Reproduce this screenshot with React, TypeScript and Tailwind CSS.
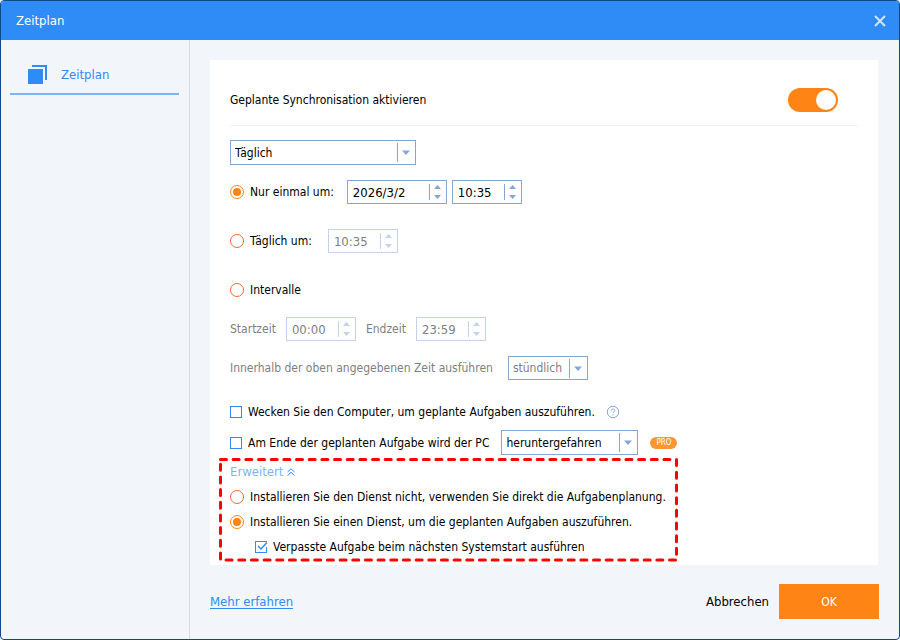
import { useState } from 'react';
import type { ReactNode } from 'react';
import clsx from 'clsx';

function RadioOption({ name, label, checked, onSelect }: {
  name: string;
  label: string;
  checked: boolean;
  onSelect: () => void;
}) {
  return (
    <label className="flex items-center gap-1.5">
      <input
        type="radio"
        name={name}
        checked={checked}
        onChange={onSelect}
        className="w-3.5 h-3.5 shrink-0 appearance-none rounded-full border border-[#ee6a35] bg-white bg-clip-content p-0.5 checked:border-[#ff8416] checked:bg-[#ff8416]"
      />
      {label}
    </label>
  );
}

function CheckOption({ label, checked, onToggle }: {
  label: string;
  checked: boolean;
  onToggle: () => void;
}) {
  return (
    <label className="flex items-center gap-1.5">
      <span className="grid">
        <input
          type="checkbox"
          checked={checked}
          onChange={onToggle}
          className="col-start-1 row-start-1 w-3 h-3 appearance-none border border-[#2f8bf6] bg-white"
        />
        {checked && (
          <svg viewBox="0 0 12 12" className="pointer-events-none col-start-1 row-start-1 w-3 h-3 overflow-visible" fill="none">
            <path d="M11.5 1v5" stroke="#fff" strokeWidth="2" />
            <path d="M3 5l3 3L12 1.5" stroke="#2f8bf6" strokeWidth="1.5" />
          </svg>
        )}
      </span>
      {label}
    </label>
  );
}

function SelectBox({ id, label, options, className }: {
  id: string;
  label: string;
  options: string[];
  className: string;
}) {
  return (
    <span className={clsx('flex items-center border border-[#86a5d6] bg-white', className)}>
      <select id={id} aria-label={label} className="h-full min-w-0 flex-1 appearance-none pl-1 outline-none">
        {options.map((option) => (
          <option key={option}>{option}</option>
        ))}
      </select>
      <svg viewBox="0 0 18 19" className="pointer-events-none w-[18px] h-[19px] shrink-0">
        <path d="M0 0h1v19H0z M5 7.5h8l-4 4.500z" fill="#86a5d6" />
      </svg>
    </span>
  );
}

function SpinBox({ label, value, disabled, className }: {
  label: string;
  value: string;
  disabled?: boolean;
  className: string;
}) {
  return (
    <span
      className={clsx(
        'flex h-6 items-center border bg-white text-[13px]',
        disabled ? 'border-[#c3d2ea] text-[#808080]' : 'border-[#86a5d6]',
        className
      )}
    >
      <input
        type="text"
        aria-label={label}
        defaultValue={value}
        disabled={disabled}
        className="h-full min-w-0 flex-1 pl-[5px] outline-none"
      />
      <svg viewBox="0 0 17 16" className="w-[17px] h-4 shrink-0" fill={disabled ? '#c3d2ea' : '#86a5d6'}>
        <path d="M0 0h1v16H0z M5 5h7L8.500 1z M5 11h7l-3.500 4z" />
      </svg>
    </span>
  );
}

function Row({ children, className = 'h-6' }: { children: ReactNode; className?: string }) {
  return <div className={clsx('flex items-center', className)}>{children}</div>;
}

export default function App() {
  const [enabled, setEnabled] = useState(true);
  const [mode, setMode] = useState('once');
  const [service, setService] = useState('install');
  const [wake, setWake] = useState(false);
  const [shutdown, setShutdown] = useState(false);
  const [missed, setMissed] = useState(true);

  return (
    <div className="flex min-h-screen flex-col overflow-hidden rounded-[4px] border border-[#0d4a8c] bg-[#f2f5fa] font-['DejaVu_Sans_Condensed','DejaVu_Sans',sans-serif] text-[12px] leading-4 text-black">
      {/* Title bar */}
      <header className="flex h-[39px] items-center justify-between bg-[#2f8bf6] pl-[15px] pr-[11px] text-white">
        <h1 className="text-[13px]">Zeitplan</h1>
        <button type="button" aria-label="Schließen" className="p-0.5">
          <svg viewBox="0 0 12 12" className="w-3 h-3" stroke="#d5e8fd" strokeWidth="1.8">
            <path d="M1 1l10 10M11 1L1 11" />
          </svg>
        </button>
      </header>

      <div className="flex flex-1">
        {/* Sidebar */}
        <nav className="w-[189px] shrink-0 border-r border-[#d5dbe1] pl-[9px] pr-2.5 pt-4">
          <a href="#zeitplan" className="flex h-[39px] items-center gap-[14px] border-b-2 border-[#7fb3f8] pl-[18px] text-[#2f8bf6]">
            <svg viewBox="0 0 19 19" className="w-[19px] h-[19px]" fill="#2f8bf6">
              <rect y="4" width="15" height="15" rx="0.5" />
              <path d="M4 0h15v15h-2V2H4z" />
            </svg>
            <span className="text-[13px]">Zeitplan</span>
          </a>
        </nav>

        <main className="flex min-w-0 flex-1 flex-col px-5 pt-5">
          <section className="mr-px bg-white px-5 pt-7 pb-1.5">
            <div className="flex items-center justify-between border-b border-[#f2f2f2] pb-[13px]">
              <label htmlFor="enable">Geplante Synchronisation aktivieren</label>
              <span className="grid items-center pr-5">
                <input
                  id="enable"
                  type="checkbox"
                  role="switch"
                  checked={enabled}
                  onChange={() => setEnabled(!enabled)}
                  className="peer col-start-1 row-start-1 h-6 w-[50px] appearance-none rounded-full bg-[#c8ced6] checked:bg-[#ff8416]"
                />
                <span className="pointer-events-none col-start-1 row-start-1 ml-0.5 h-5 w-5 rounded-full bg-white peer-checked:ml-7" />
              </span>
            </div>

            <SelectBox
              id="frequency"
              label="Häufigkeit"
              options={['Täglich', 'Wöchentlich', 'Monatlich']}
              className="mt-3.5 h-[25px] w-[186px]"
            />

            {/* Daily options */}
            <Row className="mt-[15px] h-6">
              <RadioOption name="mode" label="Nur einmal um:" checked={mode === 'once'} onSelect={() => setMode('once')} />
              <SpinBox label="Datum" value="2026/3/2" className="ml-[13px] w-[100px]" />
              <SpinBox label="Uhrzeit" value="10:35" className="ml-[5px] w-[70px]" />
            </Row>
            <Row className="mt-[25px] h-6">
              <RadioOption name="mode" label="Täglich um:" checked={mode === 'daily'} onSelect={() => setMode('daily')} />
              <SpinBox label="Tägliche Uhrzeit" value="10:35" disabled className="ml-4 w-[70px]" />
            </Row>
            <Row className="mt-[25px] h-6">
              <RadioOption name="mode" label="Intervalle" checked={mode === 'interval'} onSelect={() => setMode('interval')} />
            </Row>
            <Row className="mt-[15px] h-6 gap-2.5 text-[#808080]">
              <span>Startzeit</span>
              <SpinBox label="Startzeit" value="00:00" disabled className="w-[70px]" />
              <span>Endzeit</span>
              <SpinBox label="Endzeit" value="23:59" disabled className="w-[70px]" />
            </Row>
            <Row className="mt-[15px] h-6 gap-[15px] text-[#808080]">
              <label htmlFor="interval">Innerhalb der oben angegebenen Zeit ausführen</label>
              <SelectBox id="interval" label="Intervall" options={['stündlich', 'täglich']} className="h-6 w-20" />
            </Row>

            <Row className="mt-5 h-6 gap-3">
              <CheckOption
                label="Wecken Sie den Computer, um geplante Aufgaben auszuführen."
                checked={wake}
                onToggle={() => setWake(!wake)}
              />
              <button type="button" aria-label="Hilfe">
                <svg viewBox="0 0 12 12" className="block w-3 h-3 overflow-visible" fill="none" stroke="#86a5d6">
                  <circle cx="6" cy="6" r="5.7" />
                  <path d="M4.2 4.8c0-2.4 3.6-2.4 3.6-.2 0 1.2-1.8 1.3-1.8 2.7M6 8.2v1.2" />
                </svg>
              </button>
            </Row>
            <Row className="mt-1.5 h-[25px] gap-3">
              <CheckOption
                label="Am Ende der geplanten Aufgabe wird der PC"
                checked={shutdown}
                onToggle={() => setShutdown(!shutdown)}
              />
              <SelectBox
                id="end-action"
                label="Aktion am Ende"
                options={['heruntergefahren', 'neu gestartet']}
                className="h-[25px] w-[137px]"
              />
              <span className="rounded-full bg-[#ff9632] px-1.5 text-[8px] leading-3 text-white">PRO</span>
            </Row>

            {/* Advanced settings with the dashed highlight */}
            <div className="relative mt-[5px] grid w-[448px] gap-px">
              <svg className="pointer-events-none absolute -left-[11px] -top-[3px] h-[105px] w-[459px]" fill="none">
                <path
                  d="M1.5 2.5H457.500V103H1.500V2.500"
                  stroke="#f00"
                  strokeWidth="3"
                  strokeLinecap="round"
                  strokeDasharray="6 6.67"
                />
              </svg>
              <Row>
                <button type="button" className="flex items-center gap-1 text-[13px] text-[#7fb3f8]">
                  Erweitert
                  <svg viewBox="0 0 8 8" className="w-2 h-2" fill="none" stroke="#2f8bf6">
                    <path d="M.5 4L4 .8 7.5 4M.5 7.5L4 4.3 7.5 7.5" />
                  </svg>
                </button>
              </Row>
              <Row>
                <RadioOption
                  name="service"
                  label="Installieren Sie den Dienst nicht, verwenden Sie direkt die Aufgabenplanung."
                  checked={service === 'none'}
                  onSelect={() => setService('none')}
                />
              </Row>
              <Row>
                <RadioOption
                  name="service"
                  label="Installieren Sie einen Dienst, um die geplanten Aufgaben auszuführen."
                  checked={service === 'install'}
                  onSelect={() => setService('install')}
                />
              </Row>
              <Row className="h-6 pl-[25px]">
                <CheckOption
                  label="Verpasste Aufgabe beim nächsten Systemstart ausführen"
                  checked={missed}
                  onToggle={() => setMissed(!missed)}
                />
              </Row>
            </div>
          </section>

          <footer className="flex items-center justify-between py-[19px] text-[13px]">
            <a href="#mehr" className="leading-4 text-[#2f8bf6] underline underline-offset-2">Mehr erfahren</a>
            <div className="flex items-center gap-2.5">
              <button type="button">Abbrechen</button>
              <button type="button" className="h-[35px] w-[100px] bg-[#ff8416] text-[12px] text-white">OK</button>
            </div>
          </footer>
        </main>
      </div>
    </div>
  );
}
